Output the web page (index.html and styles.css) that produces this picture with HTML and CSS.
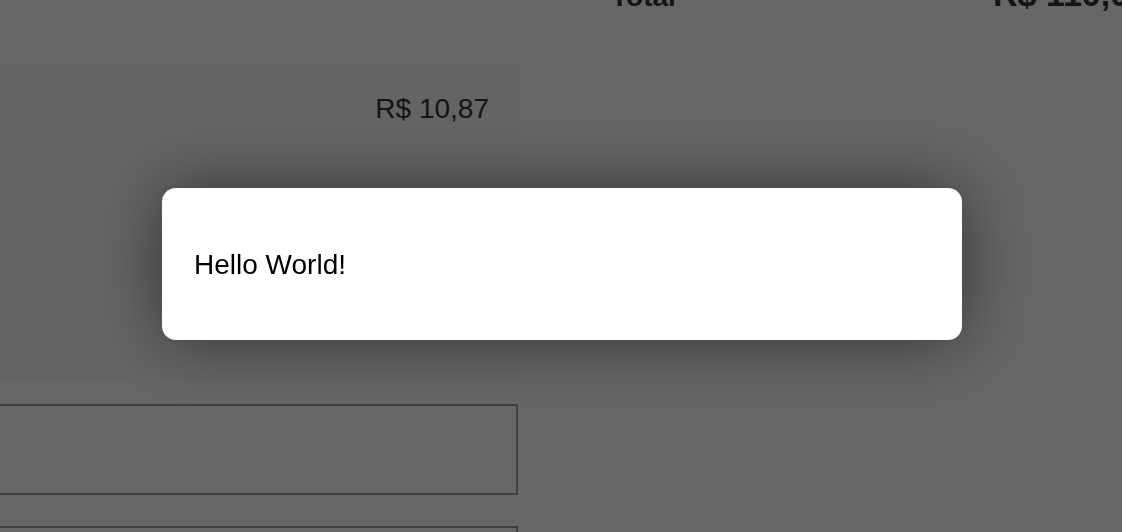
FILE: index.html
```html
<!DOCTYPE html>
<html lang="pt-BR">
<head>
<meta charset="utf-8">
<title>Pedido</title>
<link rel="stylesheet" href="styles.css">
</head>
<body>
<div class="page">
  <div class="summary">
    <span class="summary-label">Total</span>
    <span class="summary-value">R$ 110,00</span>
  </div>
  <div class="content">
    <div class="panel">
      <div class="panel-price">R$ 10,87</div>
    </div>
    <div class="field"></div>
    <div class="field"></div>
  </div>
</div>
<div class="overlay">
  <div class="modal">
    <p class="modal-text">Hello World!</p>
  </div>
</div>
</body>
</html>
```

FILE: styles.css
```css
html, body {
  margin: 0;
  padding: 0;
  height: 100%;
  overflow: hidden;
  background: #ffffff;
  font-family: "Liberation Sans", Arial, Helvetica, sans-serif;
  color: #333333;
}

.page {
  margin-top: -21px;
}

.summary {
  display: flex;
  align-items: baseline;
  padding-left: 611px;
  height: 31px;
  font-size: 28px;
  line-height: 31px;
  font-weight: bold;
  white-space: nowrap;
}

.summary-label {
  flex: 0 0 382px;
}

.summary-value {
  flex: 0 0 auto;
  font-size: 34px;
  font-weight: bold;
}

.content {
  width: 518px;
  margin-top: 52px;
}

.panel {
  background: #fbfbfb;
  height: 318px;
  padding: 31px 29px 0 0;
  box-sizing: border-box;
}

.panel-price {
  text-align: right;
  font-size: 28px;
  line-height: 32px;
  color: #333333;
}

.field {
  height: 91px;
  box-sizing: border-box;
  border: 2px solid #a0a0a0;
  border-left: none;
  margin-top: 24px;
}

.field + .field {
  margin-top: 31px;
}

.overlay {
  position: fixed;
  inset: 0;
  background: rgba(0, 0, 0, 0.6);
  display: flex;
  align-items: center;
  justify-content: center;
  padding: 0 0 4px 2px;
  box-sizing: border-box;
}

.modal {
  width: 800px;
  height: 152px;
  box-sizing: border-box;
  background: #ffffff;
  border-radius: 14px;
  box-shadow: 0 0 70px rgba(0, 0, 0, 0.5);
  padding: 61px 32px 59px;
}

.modal-text {
  margin: 0;
  font-size: 28px;
  line-height: 32px;
  color: #000000;
}
```
